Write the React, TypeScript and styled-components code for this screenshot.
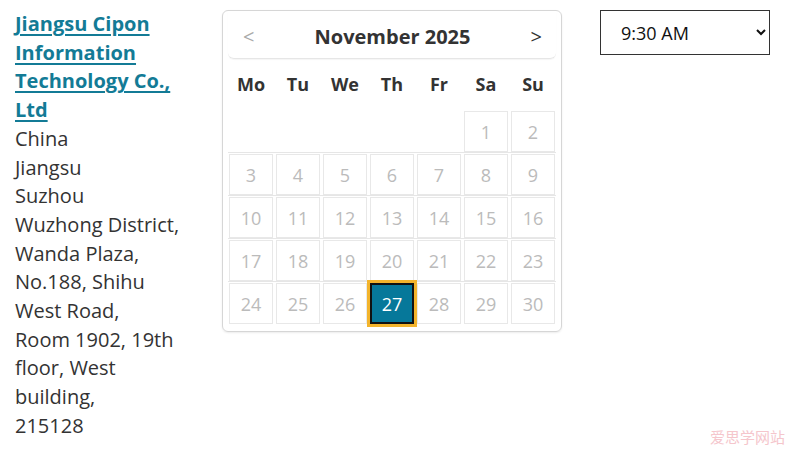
import React from "react";
import styled, { createGlobalStyle } from "styled-components";

const Global = createGlobalStyle`
  html, body { margin: 0; padding: 0; background: #fff; }
  body { font-family: "Open Sans", "Noto Sans", sans-serif; color: #333; }
`;

const Page = styled.div`
  display: flex;
  align-items: flex-start;
  padding: 10px 0 0 15px;
  height: 439px;
  position: relative;
`;

const Address = styled.div`
  width: 172px;
  font-size: 20px;
  line-height: 28.7px;
  color: #333;
  margin-right: 35px;
`;

const Company = styled.a`
  color: #137b96;
  font-weight: 700;
  text-decoration: underline;
  text-decoration-thickness: 2px;
  text-underline-offset: 3px;
  display: block;
`;

const Line = styled.div``;

const Calendar = styled.div`
  width: 328px;
  height: 320px;
  border: 1px solid #d6d6d6;
  border-radius: 6px;
  box-shadow: 0 1px 2px rgba(0, 0, 0, 0.08);
  padding: 0 5px;
  box-sizing: content-box;
  margin-right: 38px;
`;

const Header = styled.div`
  display: flex;
  align-items: center;
  justify-content: space-between;
  height: 44px;
  padding: 3px 14px 0 15px;
  border-bottom: 1px solid #e6e6e6;
  box-shadow: 0 1px 1px rgba(0, 0, 0, 0.04);
  border-radius: 0 0 6px 6px;
`;

const Nav = styled.span<{ $dim?: boolean }>`
  font-size: 20px;
  color: ${(p) => (p.$dim ? "#aaa" : "#333")};
  font-weight: 400;
`;

const Title = styled.span`
  font-size: 20px;
  font-weight: 700;
  color: #333;
`;

const DayNames = styled.div`
  display: grid;
  grid-template-columns: repeat(7, 44px);
  column-gap: 3px;
  padding: 0 1px;
  height: 50px;
  align-items: center;
`;

const DayName = styled.div`
  text-align: center;
  font-size: 18px;
  font-weight: 700;
  color: #333;
`;

const Week = styled.div<{ $first?: boolean }>`
  display: grid;
  grid-template-columns: repeat(7, 44px);
  column-gap: 3px;
  padding: 1px 1px 0;
  border-top: 1px solid ${(p) => (p.$first ? "transparent" : "#e6e6e6")};
`;

const Cell = styled.div<{ $empty?: boolean; $selected?: boolean }>`
  height: 41px;
  box-sizing: border-box;
  display: flex;
  align-items: center;
  justify-content: center;
  font-size: 18px;
  color: ${(p) => (p.$selected ? "#fff" : "#bbb")};
  border: ${(p) => (p.$selected ? 2 : 1)}px solid
    ${(p) => (p.$empty ? "transparent" : p.$selected ? "#111" : "#e8e8e8")};
  background: ${(p) => (p.$selected ? "#06789a" : "transparent")};
  outline: ${(p) => (p.$selected ? "3px solid #f3b42c" : "none")};
`;

const TimeSelect = styled.select`
  width: 170px;
  height: 45px;
  border: 1px solid #333;
  border-radius: 0;
  background: #fff;
  font-family: "Open Sans", "Noto Sans", sans-serif;
  font-size: 18px;
  color: #111;
  padding: 0 10px 0 16px;
`;

const Watermark = styled.div`
  position: absolute;
  right: 5px;
  bottom: 2px;
  font-family: "Noto Sans CJK SC", sans-serif;
  font-size: 15px;
  color: #f5c6cc;
`;

const days = ["Mo", "Tu", "We", "Th", "Fr", "Sa", "Su"];
const weeks: (number | null)[][] = [
  [null, null, null, null, null, 1, 2],
  [3, 4, 5, 6, 7, 8, 9],
  [10, 11, 12, 13, 14, 15, 16],
  [17, 18, 19, 20, 21, 22, 23],
  [24, 25, 26, 27, 28, 29, 30],
];

const addr = [
  "China",
  "Jiangsu",
  "Suzhou",
  "Wuzhong District, Wanda Plaza, No.188, Shihu West Road,",
  "Room 1902, 19th floor, West building,",
  "215128",
];

export default function App() {
  return (
    <>
      <Global />
      <Page>
        <Address>
          <Company href="#">Jiangsu Cipon Information Technology Co., Ltd</Company>
          {addr.map((a) => (
            <Line key={a}>{a}</Line>
          ))}
        </Address>
        <Calendar>
          <Header>
            <Nav $dim>&lt;</Nav>
            <Title>November 2025</Title>
            <Nav>&gt;</Nav>
          </Header>
          <DayNames>
            {days.map((d) => (
              <DayName key={d}>{d}</DayName>
            ))}
          </DayNames>
          {weeks.map((w, i) => (
            <Week key={i} $first={i === 0}>
              {w.map((d, j) => (
                <Cell key={j} $empty={d === null} $selected={d === 27}>
                  {d ?? ""}
                </Cell>
              ))}
            </Week>
          ))}
        </Calendar>
        <TimeSelect defaultValue="9:30 AM">
          <option>9:00 AM</option>
          <option>9:30 AM</option>
          <option>10:00 AM</option>
        </TimeSelect>
        <Watermark>爱思学网站</Watermark>
      </Page>
    </>
  );
}
